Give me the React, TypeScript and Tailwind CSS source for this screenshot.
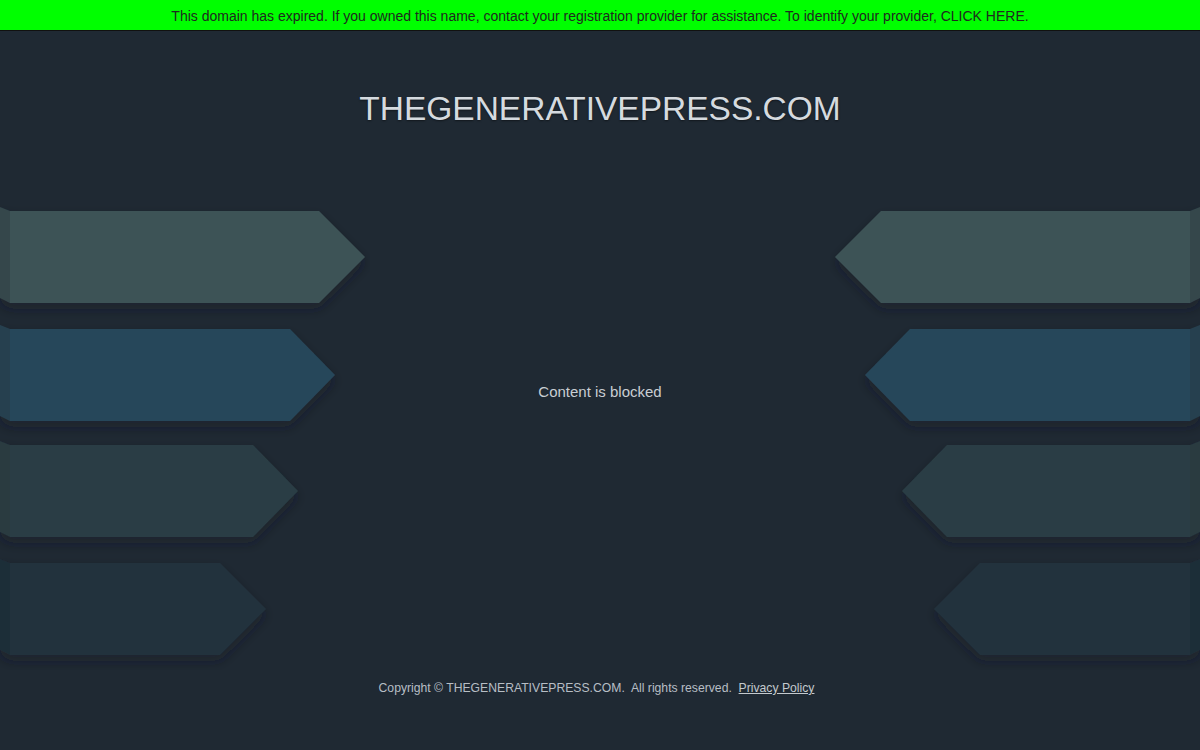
import React from "react";

const arrows = [
    { top: 11, tip: 365, shoulder: 319, fill: "#3c5257", side: "#34474c" },
    { top: 129, tip: 335, shoulder: 290, fill: "#28475a", side: "#264150" },
    { top: 245, tip: 298, shoulder: 253, fill: "#2b3e45", side: "#293a41" },
    { top: 363, tip: 266, shoulder: 220, fill: "#20313d", side: "#1f2e39" },
];

function ArrowStack({ flip = false }: { flip?: boolean }) {
    const id = flip ? "shR" : "shL";
    return (
        <svg
            width="370"
            height="470"
            viewBox="0 0 370 470"
            className={flip ? "-scale-x-100 shrink-0" : "shrink-0"}
        >
            <defs>
                <filter id={id} x="-10%" y="-20%" width="130%" height="160%">
                    <feDropShadow dx="0" dy="6" stdDeviation="6" floodColor="#161e27" floodOpacity="0.4" />
                </filter>
            </defs>
            {arrows.map((a, i) => {
                const b = a.top + 92;
                const m = a.top + 46;
                return (
                    <g key={i} filter={`url(#${id})`}>
                        <polygon
                            points={`10,${a.top} ${a.shoulder},${a.top} ${a.tip},${m} ${a.shoulder},${b} 10,${b}`}
                            fill={a.fill}
                        />
                        <polygon points={`0,${a.top - 4} 10,${a.top} 10,${b} 0,${b - 5}`} fill={a.side} />
                    </g>
                );
            })}
        </svg>
    );
}

export default function App() {
    return (
        <div
            className="w-[1200px] h-[750px] overflow-hidden bg-[#1f2933] flex flex-col"
            style={{ fontFamily: '"Liberation Sans", Arial, sans-serif' }}
        >
            <div className="h-[31px] shrink-0 bg-[#00ff00] border-b border-[#111] flex items-center justify-center pt-[2px] text-[14px] text-[#1f2a1f]">
                This domain has expired. If you owned this name, contact your registration provider for assistance. To identify your provider, CLICK HERE.
            </div>

            <div className="h-[169px] shrink-0 flex justify-center pt-[60px]">
                <h1 className="text-[33.5px] leading-[36px] text-[#d5dadf] [text-shadow:0_1px_2px_rgba(0,0,0,0.45)]">
                    THEGENERATIVEPRESS.COM
                </h1>
            </div>

            <div className="flex justify-between items-start h-[470px] shrink-0">
                <ArrowStack />
                <div className="pt-[182px] text-[15px] leading-[20px] text-[#c9ced3]">Content is blocked</div>
                <ArrowStack flip />
            </div>

            <div className="flex justify-center pt-[9px] pr-[7px] text-[12.2px] text-[#b7bec5] whitespace-pre">
                <span>Copyright © THEGENERATIVEPRESS.COM.  All rights reserved.  </span>
                <a className="underline text-[#c3c9ce]">Privacy Policy</a>
            </div>
        </div>
    );
}
